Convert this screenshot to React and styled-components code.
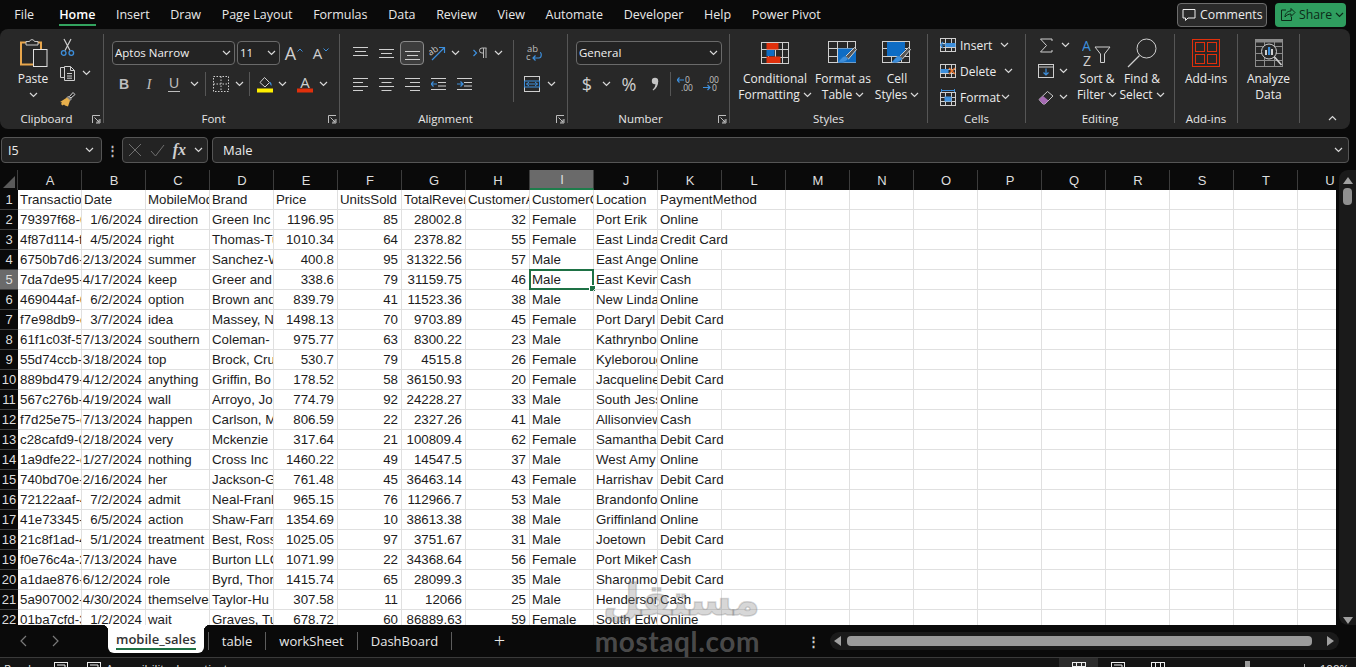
import React from 'react';
import styled, { createGlobalStyle } from 'styled-components';

const GlobalStyle = createGlobalStyle`
  html, body { margin: 0; padding: 0; background: #0a0a0a; }
  * { box-sizing: border-box; }
`;

const UI_FONT = `"Open Sans", "Noto Sans", sans-serif`;
const CELL_FONT = `"Liberation Sans", Arial, sans-serif`;
const LINE = '#cfcfcf';
const BLUE = '#3d8fdc';
const RED = '#e0300c';

const COLS = 'ABCDEFGHIJKLMNOPQRSTU'.split('');
const HEAD = ['TransactionID', 'Date', 'MobileModel', 'Brand', 'Price', 'UnitsSold', 'TotalRevenue', 'CustomerAge', 'CustomerGender', 'Location', 'PaymentMethod'];
const DATA = [
  ['79397f68-6e', '1/6/2024', 'direction', 'Green Inc', '1196.95', '85', '28002.8', '32', 'Female', 'Port Erik', 'Online'],
  ['4f87d114-fa', '4/5/2024', 'right', 'Thomas-Tu', '1010.34', '64', '2378.82', '55', 'Female', 'East Linda', 'Credit Card'],
  ['6750b7d6-a', '2/13/2024', 'summer', 'Sanchez-Wu', '400.8', '95', '31322.56', '57', 'Male', 'East Angel', 'Online'],
  ['7da7de95-1', '4/17/2024', 'keep', 'Greer and', '338.6', '79', '31159.75', '46', 'Male', 'East Kevin', 'Cash'],
  ['469044af-0', '6/2/2024', 'option', 'Brown and', '839.79', '41', '11523.36', '38', 'Male', 'New Linda', 'Online'],
  ['f7e98db9-c', '3/7/2024', 'idea', 'Massey, N', '1498.13', '70', '9703.89', '45', 'Female', 'Port Daryl', 'Debit Card'],
  ['61f1c03f-5a', '7/13/2024', 'southern', 'Coleman-', '975.77', '63', '8300.22', '23', 'Male', 'Kathrynbor', 'Online'],
  ['55d74ccb-4', '3/18/2024', 'top', 'Brock, Cruz', '530.7', '79', '4515.8', '26', 'Female', 'Kyleborough', 'Online'],
  ['889bd479-b', '4/12/2024', 'anything', 'Griffin, Bo', '178.52', '58', '36150.93', '20', 'Female', 'Jacqueline', 'Debit Card'],
  ['567c276b-7', '4/19/2024', 'wall', 'Arroyo, Jo', '774.79', '92', '24228.27', '33', 'Male', 'South Jess', 'Online'],
  ['f7d25e75-c', '7/13/2024', 'happen', 'Carlson, M', '806.59', '22', '2327.26', '41', 'Male', 'Allisonview', 'Cash'],
  ['c28cafd9-0', '2/18/2024', 'very', 'Mckenzie', '317.64', '21', '100809.4', '62', 'Female', 'Samantha', 'Debit Card'],
  ['1a9dfe22-c', '1/27/2024', 'nothing', 'Cross Inc', '1460.22', '49', '14547.5', '37', 'Male', 'West Amy', 'Online'],
  ['740bd70e-d', '2/16/2024', 'her', 'Jackson-G', '761.48', '45', '36463.14', '43', 'Female', 'Harrishav', 'Debit Card'],
  ['72122aaf-4', '7/2/2024', 'admit', 'Neal-Frank', '965.15', '76', '112966.7', '53', 'Male', 'Brandonfo', 'Online'],
  ['41e73345-a', '6/5/2024', 'action', 'Shaw-Farr', '1354.69', '10', '38613.38', '38', 'Male', 'Griffinland', 'Online'],
  ['21c8f1ad-4', '5/1/2024', 'treatment', 'Best, Ross', '1025.05', '97', '3751.67', '31', 'Male', 'Joetown', 'Debit Card'],
  ['f0e76c4a-2', '7/13/2024', 'have', 'Burton LLC', '1071.99', '22', '34368.64', '56', 'Female', 'Port Mikeh', 'Cash'],
  ['a1dae876-e', '6/12/2024', 'role', 'Byrd, Thor', '1415.74', '65', '28099.3', '35', 'Male', 'Sharonmo', 'Debit Card'],
  ['5a907002-1', '4/30/2024', 'themselves', 'Taylor-Hu', '307.58', '11', '12066', '25', 'Male', 'Henderson', 'Cash'],
  ['01ba7cfd-3', '1/2/2024', 'wait', 'Graves, Tu', '678.72', '60', '86889.63', '59', 'Female', 'South Edw', 'Online'],
];
const NUMERIC = [1, 4, 5, 6, 7];

/* ---------- little drawings ---------- */
const Chevron = ({ up, color = '#d8d8d8' }) => (
  <svg width="9" height="6" viewBox="0 0 9 6" fill="none">
    <path d={up ? 'M1 5l3.5-3.5L8 5' : 'M1 1l3.5 3.5L8 1'} stroke={color} strokeWidth="1.2" />
  </svg>
);

const Caret = ({ up }) => (
  <svg width="6" height="4" viewBox="0 0 6 4" fill="none">
    <path d={up ? 'M.5 3.5L3 1l2.5 2.500' : 'M.5 .5L3 3l2.500-2.500'} stroke={BLUE} />
  </svg>
);

const Launcher = () => (
  <svg width="10" height="10" viewBox="0 0 10 10" fill="none" stroke="#bdbdbd">
    <path d="M1.5 9V1.5H9M9 5v4H5M3.5 3.5L8 8M8 5.5V8H5.5" />
  </svg>
);

const IconPaste = () => (
  <svg width="29" height="31" viewBox="0 0 29 31" fill="none">
    <path d="M7 5.5H2V27.5H14M18 5.5h4V12" stroke="#e8a64c" strokeWidth="2" />
    <path d="M7 8V4.500h3.500a2.600 2.600 0 0 1 5 0H19V8z" stroke="#c8c8c8" fill="#282828" />
    <rect x="14.500" y="12.500" width="13.500" height="17" stroke="#e0e0e0" fill="#282828" />
  </svg>
);
const IconCut = () => (
  <svg width="15" height="19" viewBox="0 0 15 19" fill="none">
    <path d="M4 1l6 11.500M11 1L5 12.500" stroke={LINE} strokeWidth="1.200" />
    <circle cx="3.700" cy="15" r="2.300" stroke={BLUE} strokeWidth="1.300" />
    <circle cx="11.300" cy="15" r="2.300" stroke={BLUE} strokeWidth="1.300" />
  </svg>
);
const IconCopy = () => (
  <svg width="17" height="17" viewBox="0 0 17 17" fill="none" stroke={LINE}>
    <path d="M5.500 2.500h-4v10h4" />
    <path d="M5.500 1.500h6l4 4v10h-10zM11.500 1.500v4h4M8 8.500h5M8 11h5M8 13.200h5" />
  </svg>
);
const IconBrush = () => (
  <svg width="17" height="17" viewBox="0 0 17 17" fill="none">
    <path d="M10.500 5.500l3.500-4 2 2-4 3.500z" stroke={LINE} />
    <path d="M9.500 5l3 3-1.500 1.500L8 6.500z" fill="#777" stroke={LINE} strokeWidth=".6" />
    <path d="M8 6.500l3 3-2 6-3-1-1-1-1.500 1L2 13l1-1.500-2-.5z" fill="#e8b04c" />
  </svg>
);
const IconBorders = () => (
  <svg width="16" height="16" viewBox="0 0 16 16" fill="none" stroke={LINE} strokeDasharray="1.500 1.500">
    <rect x=".5" y=".5" width="15" height="15" />
    <path d="M8 .5v15M.5 8h15" />
  </svg>
);
const IconFill = () => (
  <svg width="16" height="18" viewBox="0 0 16 18" fill="none">
    <path d="M3 7.500L7.500 2.500l5 5-4.500 4.500z" stroke={LINE} />
    <path d="M13 7.500c1 1.500 1.500 2.400 1 3" stroke={BLUE} strokeWidth="1.400" />
    <rect y="13.500" width="16" height="4" fill="#ffef00" />
  </svg>
);
const IconColorA = () => (
  <svg width="16" height="18" viewBox="0 0 16 18">
    <text x="8" y="12.500" fontFamily={UI_FONT} fontSize="15" textAnchor="middle" fill={LINE}>A</text>
    <rect y="13.500" width="16" height="4" fill="#e0300c" />
  </svg>
);
const AlignLines = ({ widths, y = 0, anchor = 'left' }) => (
  <svg width="15" height="18" viewBox="0 0 15 18" stroke={LINE} fill="none">
    {widths.map((w, i) => {
      const x = anchor === 'left' ? 0 : anchor === 'right' ? 15 - w : (15 - w) / 2;
      return <path key={i} d={`M${x} ${y + 3.5 + i * 4}h${w}`} />;
    })}
  </svg>
);
const IconOrient = () => (
  <svg width="17" height="16" viewBox="0 0 17 16" fill="none">
    <text x="0" y="9" fontSize="9" fontFamily={UI_FONT} fill={LINE} transform="rotate(-35 4 8)">ab</text>
    <path d="M3 15L15 3M10 2.500h5.500V8" stroke={BLUE} strokeWidth="1.200" />
  </svg>
);
const IconRtl = () => (
  <svg width="15" height="12" viewBox="0 0 15 12" fill="none">
    <path d="M.500 3l3 3-3 3" stroke={BLUE} strokeWidth="1.200" />
    <path d="M13 1v10M10.500 1v10M13.500 1H9a2.500 2.500 0 0 0 0 5h1.500" stroke="#b8b8b8" />
  </svg>
);
const IconIndent = ({ inward }) => (
  <svg width="15" height="14" viewBox="0 0 15 14" fill="none">
    <path d="M0 1.500h15M7 5.500h8M7 9h8M0 12.500h15" stroke={LINE} />
    <path d={inward ? 'M0 7h6M3.500 4.500L6 7l-2.500 2.500' : 'M6 7H0M2.500 4.500L0 7l2.500 2.500'} stroke={BLUE} strokeWidth="1.200" />
  </svg>
);
const IconWrap = () => (
  <svg width="16" height="18" viewBox="0 0 16 18" fill="none">
    <text x="1" y="8" fontSize="9.500" fontFamily={UI_FONT} fill="#bdbdbd">ab</text>
    <text x="0" y="16" fontSize="9.500" fontFamily={UI_FONT} fill="#bdbdbd">c</text>
    <path d="M14 8.500c1.800 0 1.800 5.500-1 5.500H7M9.500 11.500L7 14l2.500 2.500" stroke={BLUE} strokeWidth="1.200" />
  </svg>
);
const IconMerge = () => (
  <svg width="16" height="16" viewBox="0 0 16 16" fill="none">
    <rect x=".500" y=".500" width="15" height="15" stroke={LINE} />
    <rect x=".500" y="5" width="15" height="6" stroke={BLUE} />
    <path d="M2.500 8h11M5 6l-2.500 2L5 10M11 6l2.500 2L11 10" stroke={BLUE} />
  </svg>
);
const IconComma = () => (
  <svg width="8" height="14" viewBox="0 0 8 14">
    <circle cx="4" cy="4" r="3.200" fill="#c4c4c4" />
    <path d="M7.200 4c0 4-1.500 7.500-5 9.500l-.6-.8C3.500 11 4.500 9 4.500 6.500z" fill="#c4c4c4" />
  </svg>
);
const IconDecimal = ({ more }) => (
  <svg width="17" height="16" viewBox="0 0 17 16" fill="none">
    <text x={more ? 4 : 8} y="7" fontSize="8.500" fontFamily={UI_FONT} fill="#c4c4c4">{more ? '.00' : '0'}</text>
    <text x={more ? 9 : 4} y="15" fontSize="8.500" fontFamily={UI_FONT} fill="#c4c4c4">{more ? '0' : '.00'}</text>
    <path
      d={more ? 'M0 11.500h7M4.500 9L7 11.500 4.500 14' : 'M7 4H0M2.500 1.500L0 4l2.500 2.500'}
      stroke={BLUE}
      strokeWidth="1.200"
    />
  </svg>
);
const GridLines = ({ w, h, cols, rows, color = LINE }) => (
  <g stroke={color} fill="none">
    <rect x=".500" y=".500" width={w - 1} height={h - 1} />
    {Array.from({ length: cols - 1 }, (_, i) => (
      <path key={`c${i}`} d={`M${Math.round(((i + 1) * w) / cols) + 0.5} 0v${h}`} />
    ))}
    {Array.from({ length: rows - 1 }, (_, i) => (
      <path key={`r${i}`} d={`M0 ${Math.round(((i + 1) * h) / rows) + 0.5}h${w}`} />
    ))}
  </g>
);
const MiniBrush = () => (
  <g>
    <path d="M26.500 6.500l2 2-8 9.500-3-2.500z" fill="#555" stroke="#cfcfcf" />
    <path d="M17 15c-3 .5-4 3-7 6 4 1 8 0 10-3z" fill={BLUE} stroke="#1c6cb8" strokeWidth=".6" />
  </g>
);
const IconConditional = () => (
  <svg width="28" height="22" viewBox="0 0 28 22">
    <GridLines w={28} h={22} cols={4} rows={3} />
    <rect x="5.500" y="1" width="12" height="6.500" fill={RED} />
    <rect x="5.500" y="8" width="8" height="6" fill="#0e6cc4" />
    <rect x="5.500" y="14.500" width="14" height="6.500" fill={RED} />
  </svg>
);
const IconTable = () => (
  <svg width="31" height="24" viewBox="0 0 31 24">
    <GridLines w={28} h={22} cols={3} rows={3} />
    <rect x="10" y="7.500" width="18" height="14" fill="#0e6cc4" />
    <MiniBrush />
  </svg>
);
const IconCellStyles = () => (
  <svg width="31" height="24" viewBox="0 0 31 24">
    <GridLines w={28} h={22} cols={3} rows={3} />
    <rect x="5" y="1" width="18" height="14" fill="#0e6cc4" />
    <MiniBrush />
  </svg>
);
const IconInsert = () => (
  <svg width="16" height="14" viewBox="0 0 16 14" fill="none">
    <GridLines w={16} h={14} cols={3} rows={3} />
    <rect x="5.500" y="5" width="10" height="4" fill={BLUE} />
    <path d="M7 7H.500M3 4L.500 7 3 10" stroke={BLUE} strokeWidth="1.200" />
  </svg>
);
const IconDelete = () => (
  <svg width="16" height="14" viewBox="0 0 16 14" fill="none">
    <GridLines w={16} h={14} cols={3} rows={3} />
    <rect x=".500" y="5" width="8" height="4" fill={BLUE} />
    <path d="M9 4l6 6M15 4l-6 6" stroke="#e8742c" strokeWidth="1.300" />
  </svg>
);
const IconFormat = () => (
  <svg width="16" height="17" viewBox="0 0 16 17" fill="none">
    <path d="M1.500 0v3M14.500 0v3M1.500 1.500h13" stroke={BLUE} />
    <g transform="translate(0 3)"><GridLines w={16} h={14} cols={3} rows={3} /></g>
    <rect x="4.500" y="7.500" width="7" height="5" fill={BLUE} />
  </svg>
);
const IconSum = () => (
  <svg width="15" height="15" viewBox="0 0 15 15">
    <path d="M13 3V1H1.500L7.500 7.500 1.500 14H13v-2" fill="none" stroke={LINE} />
  </svg>
);
const IconFillDown = () => (
  <svg width="16" height="14" viewBox="0 0 16 14" fill="none">
    <rect x=".500" y=".500" width="15" height="13" stroke={LINE} />
    <path d="M.500 3h15" stroke={LINE} />
    <path d="M8 4.500V11M5.500 8.500L8 11l2.500-2.500" stroke={BLUE} strokeWidth="1.200" />
  </svg>
);
const IconEraser = () => (
  <svg width="16" height="15" viewBox="0 0 16 15" fill="none">
    <path d="M1 9.500L9.500 1.500 15 6l-8 8H5z" stroke="#c8c8c8" />
    <path d="M1 9.500L5 6l5.500 4.500L7 14H5z" fill="#a66bb4" />
  </svg>
);
const IconSort = () => (
  <svg width="30" height="30" viewBox="0 0 30 30" fill="none">
    <text x="0" y="13" fontSize="14" fontFamily={UI_FONT} fill={BLUE}>A</text>
    <text x="1" y="28" fontSize="14" fontFamily={UI_FONT} fill={LINE}>Z</text>
    <path d="M13 9h15l-5.500 7v8.500h-4V16z" stroke={LINE} />
  </svg>
);
const IconSearch = () => (
  <svg width="30" height="30" viewBox="0 0 30 30" fill="none" stroke={LINE}>
    <circle cx="19.500" cy="10.500" r="9.500" />
    <path d="M12.500 17.500L1 29" strokeWidth="1.300" />
  </svg>
);
const IconAddIns = () => (
  <svg width="28" height="28" viewBox="0 0 28 28" fill="none" stroke={RED}>
    <rect x=".500" y=".500" width="27" height="27" />
    <rect x="3.500" y="3.500" width="9" height="9" />
    <rect x="15.500" y="3.500" width="9" height="9" />
    <rect x="3.500" y="15.500" width="9" height="9" />
    <rect x="15.500" y="15.500" width="9" height="9" />
  </svg>
);
const IconAnalyze = () => (
  <svg width="28" height="28" viewBox="0 0 28 28" fill="none">
    <GridLines w={28} h={28} cols={3} rows={4} color="#8c8c8c" />
    <rect x="0" y="0" width="28" height="3.500" fill="#8c8c8c" />
    <circle cx="14" cy="12.500" r="7.500" stroke={LINE} fill="#282828" />
    <path d="M19.500 18l7 8" stroke={LINE} strokeWidth="1.600" />
    <rect x="10" y="11" width="2" height="5" fill={LINE} />
    <rect x="13" y="8" width="2.200" height="8" fill={BLUE} />
    <rect x="16" y="10" width="2" height="6" fill={LINE} />
  </svg>
);
const IconComment = () => (
  <svg width="14" height="14" viewBox="0 0 14 14" fill="none" stroke="#eee">
    <path d="M1 1.500h12v8.500H6L3.500 12.500V10H1z" />
  </svg>
);
const IconShare = () => (
  <svg width="16" height="15" viewBox="0 0 16 15" fill="none" stroke="#0c2a18">
    <path d="M6 3H1.500v10.500h10V10" />
    <path d="M5 10c0-3.500 2.500-6 6-6V1.500l4 4-4 4V7C8.500 7 6.500 8 5 10z" />
  </svg>
);
const IconX = () => (
  <svg width="14" height="14" viewBox="0 0 14 14" stroke="#6f6f6f" fill="none">
    <path d="M1 1l12 12M13 1L1 13" />
  </svg>
);
const IconCheck = () => (
  <svg width="15" height="13" viewBox="0 0 15 13" stroke="#6f6f6f" fill="none">
    <path d="M1 7l4.500 5L14 1" />
  </svg>
);
const Pager = ({ next }) => (
  <svg width="8" height="12" viewBox="0 0 8 12" fill="none" stroke="#7a7a7a" strokeWidth="1.200">
    <path d={next ? 'M1 1l5 5-5 5' : 'M7 1L2 6l5 5'} />
  </svg>
);
const Triangle = ({ dir, color = '#a0a0a0' }) => {
  const upright = dir === 'up' || dir === 'down';
  const d = {
    up: 'M0 8L5 1l5 7z',
    down: 'M0 1l5 7 5-7z',
    left: 'M8 0L1 5l7 5z',
    right: 'M1 0l7 5-7 5z',
  }[dir];
  return (
    <svg width={upright ? 10 : 8} height={upright ? 8 : 10} viewBox={upright ? '0 0 10 8' : '0 0 8 10'}>
      <path d={d} fill={color} />
    </svg>
  );
};
const ViewIcon = ({ kind }) => (
  <svg width="14" height="14" viewBox="0 0 14 14" fill="none" stroke="#eee">
    <rect x=".500" y=".500" width="13" height="13" />
    {kind === 'grid' && <path d="M0 4.500h14M4.500 0v14M9.500 0v14" />}
    {kind === 'page' && <path d="M3 3h8v11" />}
    {kind === 'break' && <path d="M4.500 0v14M9.500 0v14" />}
  </svg>
);

/* ---------- page ---------- */
const Page = styled.div`
  position: relative;
  display: flex;
  flex-direction: column;
  width: 1356px;
  height: 667px;
  overflow: hidden;
  background: #0a0a0a;
  font-family: ${UI_FONT};
  font-size: 12px;
  color: #ececec;
`;

const MenuBar = styled.div`
  display: flex;
  align-items: center;
  height: 29px;
  padding-left: 4px;
  flex-shrink: 0;
`;

const MenuTab = styled.div`
  position: relative;
  padding: 0 10.3px;
  line-height: 28px;
  font-size: 12.5px;
  font-weight: ${(p) => (p.$active ? 600 : 400)};
  color: ${(p) => (p.$active ? '#fff' : '#e8e8e8')};
  margin-right: ${(p) => (p.$first ? '4.5px' : 0)};

  &::after {
    content: ${(p) => (p.$active ? "''" : 'none')};
    position: absolute;
    left: 10px;
    right: 10px;
    bottom: 3px;
    height: 2px;
    background: #33a35f;
  }
`;

const MenuActions = styled.div`
  display: flex;
  gap: 8px;
  margin-left: auto;
  padding-right: 10px;
`;

const CommentsButton = styled.div`
  display: flex;
  align-items: center;
  gap: 4px;
  width: 90px;
  height: 24px;
  padding-left: 4px;
  background: #2a2a2a;
  border: 1px solid #6d6d6d;
  border-radius: 4px;
  font-size: 12.3px;
`;

const ShareButton = styled.div`
  display: flex;
  align-items: center;
  gap: 3px;
  width: 71px;
  height: 24px;
  padding-left: 5px;
  background: #2f9e5f;
  border-radius: 4px;
  font-size: 12.3px;
  color: #0c2a18;
`;

const Ribbon = styled.div`
  position: relative;
  display: flex;
  width: 1350px;
  height: 100px;
  padding: 5px 0 6px;
  flex-shrink: 0;
  background: #282828;
  border-radius: 8px;
`;

const Group = styled.div`
  position: relative;
  display: flex;
  flex-direction: column;
  width: ${(p) => p.$w}px;
  flex-shrink: 0;
  border-right: 1px solid #565656;
`;

const GroupBody = styled.div`
  display: flex;
  flex: 1;
  min-height: 0;
  padding-left: ${(p) => p.$pad || 0}px;
`;

const GroupLabel = styled.div`
  height: 14px;
  margin-bottom: -3px;
  padding-right: ${(p) => p.$pr || 0}px;
  line-height: 14px;
  text-align: center;
  font-size: 11.5px;
  color: #e6e6e6;
`;

const LauncherSlot = styled.span`
  position: absolute;
  right: 2px;
  bottom: -1px;
  display: flex;
`;

const BigButton = styled.div`
  display: flex;
  flex-direction: column;
  align-items: center;
  width: ${(p) => p.$w}px;
  margin-left: ${(p) => p.$ml || 0}px;
  flex-shrink: 0;
  line-height: 16px;
  font-size: 12px;
  white-space: nowrap;
`;

const BigIcon = styled.div`
  display: flex;
  align-items: center;
  justify-content: center;
  height: 37px;
`;

const CaretLine = styled.div`
  display: flex;
  align-items: center;
  justify-content: center;
  gap: 3px;
  height: 16px;
`;

const ToolStack = styled.div`
  display: flex;
  flex-direction: column;
  width: ${(p) => (p.$w ? `${p.$w}px` : 'auto')};
  margin-left: ${(p) => p.$ml || 0}px;
  padding-top: ${(p) => p.$top ?? 0}px;
  gap: ${(p) => p.$gap ?? 0}px;
`;

const ToolRow = styled.div`
  display: flex;
  align-items: center;
  height: 24px;
`;

const Tool = styled.div`
  display: flex;
  align-items: center;
  justify-content: center;
  flex-shrink: 0;
  width: ${(p) => p.$w}px;
  height: 24px;
  margin-left: ${(p) => p.$ml || 0}px;
  border-radius: 4px;
  border: ${(p) => (p.$active ? '1px solid #8a8a8a' : 'none')};
  background: ${(p) => (p.$active ? '#3d3d3d' : 'transparent')};
  font-size: ${(p) => p.$size || 13}px;
  color: #cfcfcf;
`;

const Bold = styled.span`
  font-family: ${CELL_FONT};
  font-weight: 700;
  font-size: 14px;
  color: #bdbdbd;
`;
const Italic = styled.span`
  font-family: "Liberation Serif", serif;
  font-style: italic;
  font-size: 15px;
  color: #bdbdbd;
`;
const Under = styled.span`
  font-family: ${CELL_FONT};
  font-size: 14px;
  color: #bdbdbd;
  border-bottom: 1px solid #bdbdbd;
  line-height: 15px;
  padding: 0 1px;
`;
const GrowA = styled.span`
  display: flex;
  align-items: flex-start;
  gap: 1px;
  font-size: ${(p) => p.$size}px;
  line-height: 20px;
  color: #cfcfcf;

  svg { margin-top: 5px; }
`;

const VRule = styled.div`
  width: 1px;
  height: ${(p) => p.$h || 24}px;
  margin: 0 ${(p) => p.$m ?? 3}px;
  background: #565656;
  flex-shrink: 0;
`;

const Select = styled.div`
  display: flex;
  align-items: center;
  justify-content: space-between;
  width: ${(p) => p.$w}px;
  height: 24px;
  margin-left: ${(p) => p.$ml || 0}px;
  padding: 0 3px 1px 2px;
  flex-shrink: 0;
  background: #232323;
  border: 1px solid #6a6a6a;
  border-radius: 4px;
  font-size: 11.5px;
  color: #f0f0f0;
`;

const CellAction = styled.div`
  display: flex;
  align-items: center;
  height: 22px;
  font-size: 12px;
`;

const ActionIcon = styled.span`
  display: flex;
  justify-content: center;
  width: 20px;
  margin-right: 2px;
`;

const ActionChevron = styled.span`
  display: flex;
  margin-left: ${(p) => p.$ml || 0}px;
`;

const CollapseSlot = styled.div`
  position: absolute;
  right: 13px;
  bottom: 8px;
  display: flex;
`;

const FormulaBar = styled.div`
  display: flex;
  align-items: center;
  height: 26px;
  margin-top: 8px;
  padding: 0 7px 0 1px;
  flex-shrink: 0;
`;

const FieldBox = styled.div`
  display: flex;
  align-items: center;
  height: 26px;
  background: #232323;
  border: 1px solid #555;
  border-radius: 4px;
  font-size: 13px;
`;

const NameBox = styled(FieldBox)`
  justify-content: space-between;
  width: 101px;
  padding: 0 7px 0 6px;
  font-size: 12.5px;
`;

const BarDots = styled.span`
  width: 20px;
  text-align: center;
  font-weight: 700;
  color: #bbb;
  font-size: 13px;
`;

const FuncBox = styled(FieldBox)`
  justify-content: space-between;
  width: 86px;
  padding: 0 4px 0 5px;
`;

const FxLabel = styled.span`
  font-family: "Liberation Serif", serif;
  font-style: italic;
  font-weight: 700;
  font-size: 16px;
  color: #cfcfcf;
`;

const ValueBox = styled(FieldBox)`
  flex: 1;
  justify-content: space-between;
  margin-left: 4px;
  padding: 0 5px 0 10px;
`;

const SheetArea = styled.div`
  display: flex;
  height: 455px;
  flex-shrink: 0;
  margin-top: 7px;
`;

const SheetClip = styled.div`
  flex: 1;
  min-width: 0;
  overflow: hidden;
`;

const Sheet = styled.div`
  display: grid;
  grid-template-columns: 18px repeat(21, 64px);
  grid-auto-rows: 20px;
  width: max-content;
  background: #fff;
  font-family: ${CELL_FONT};
  font-size: 13.3px;
  color: #1c1c1c;
`;

const Corner = styled.div`
  position: relative;
  background: #0a0a0a;
  border-right: 1px solid #3c3c3c;

  &::after {
    content: '';
    position: absolute;
    right: 2px;
    bottom: 2px;
    border-style: solid;
    border-width: 0 0 12px 12px;
    border-color: transparent transparent #5a5a5a transparent;
  }
`;

const ColHead = styled.div`
  display: flex;
  align-items: center;
  justify-content: center;
  padding-left: 1px;
  background: ${(p) => (p.$selected ? '#6a6a6a' : '#0a0a0a')};
  border-right: 1px solid #3c3c3c;
  border-bottom: ${(p) => (p.$selected ? '2px solid #1e7d4b' : 'none')};
  font-size: 13px;
  color: #dedede;
`;

const RowHead = styled.div`
  display: flex;
  align-items: center;
  justify-content: center;
  background: ${(p) => (p.$selected ? '#6a6a6a' : '#0a0a0a')};
  border-bottom: 1px solid #3c3c3c;
  font-size: 13px;
  color: #dedede;
`;

const Cell = styled.div`
  position: relative;
  padding: 0 ${(p) => (p.$num ? '3px' : '0')} 0 ${(p) => (p.$num ? '0' : '2px')};
  line-height: 20px;
  text-align: ${(p) => (p.$num ? 'right' : 'left')};
  white-space: nowrap;
  overflow: ${(p) => (p.$spill ? 'visible' : 'hidden')};
  border-right: 1px solid ${(p) => (p.$spill ? 'transparent' : '#e0e0e0')};
  border-bottom: 1px solid #e0e0e0;

  ${(p) =>
    p.$active &&
    `
    overflow: visible;
    &::before {
      content: '';
      position: absolute;
      inset: -1px -1px -1px -1px;
      border: 2px solid #1e7145;
    }
    &::after {
      content: '';
      position: absolute;
      right: -3px;
      bottom: -3px;
      width: 5px;
      height: 5px;
      background: #1e7145;
      border: 1px solid #fff;
    }
  `}
`;

const VScroll = styled.div`
  display: flex;
  flex-direction: column;
  align-items: center;
  width: 17px;
  margin-left: 3px;
  padding: 6px 0 1px;
  flex-shrink: 0;
  background: #1a1a1a;
  border-radius: 9px 0 0 9px;
`;

const VThumb = styled.div`
  width: 9px;
  height: 17px;
  margin-top: 4px;
  background: #909090;
  border-radius: 4px;
`;

const VSpacer = styled.div`
  flex: 1;
`;

const TabBar = styled.div`
  display: flex;
  align-items: center;
  height: 32px;
  flex-shrink: 0;
  font-size: 13px;
  color: #e8e8e8;
`;

const TabNav = styled.div`
  display: flex;
  gap: 25px;
  width: 108px;
  padding-left: 19px;
`;

const ActiveTab = styled.div`
  position: relative;
  align-self: flex-start;
  display: flex;
  flex-direction: column;
  align-items: center;
  width: 96px;
  height: 28px;
  padding-top: 5px;
  background: #fff;
  border-radius: 0 0 6px 6px;
  font-weight: 600;
  color: #333;

  &::before, &::after {
    content: '';
    position: absolute;
    top: 0;
    width: 6px;
    height: 6px;
  }
  &::before {
    left: -6px;
    background: radial-gradient(circle at 0 100%, transparent 6px, #fff 6.5px);
  }
  &::after {
    right: -6px;
    background: radial-gradient(circle at 100% 100%, transparent 6px, #fff 6.5px);
  }
`;

const TabUnderline = styled.div`
  width: 80px;
  height: 2px;
  background: #1e7145;
`;

const TabItem = styled.div`
  width: ${(p) => p.$w}px;
  text-align: center;
`;

const TabSep = styled.div`
  width: 1px;
  height: 18px;
  margin-left: ${(p) => p.$ml || 0}px;
  background: #5c5c5c;
`;

const PlusBtn = styled.div`
  width: 95px;
  text-align: center;
  font-size: 20px;
  font-weight: 300;
  line-height: 20px;
`;

const HScrollWrap = styled.div`
  display: flex;
  align-items: center;
  margin-left: auto;
  padding-right: 17px;
`;

const HDots = styled.span`
  width: 16px;
  margin-right: 9px;
  text-align: center;
  font-weight: 700;
  color: #ccc;
`;

const HTrack = styled.div`
  display: flex;
  align-items: center;
  justify-content: space-between;
  width: 509px;
  height: 18px;
  padding: 0 5px 0 3px;
  background: #1a1a1a;
  border-radius: 9px;
`;

const HThumb = styled.div`
  width: 465px;
  height: 10px;
  margin-right: 8px;
  background: #9b9b9b;
  border-radius: 4px;
`;

const StatusBar = styled.div`
  display: flex;
  align-items: center;
  height: 22px;
  margin-bottom: -12px;
  padding-left: 4px;
  flex-shrink: 0;
  background: #141414;
  border-top: 1px solid #3a3a3a;
  font-size: 11.5px;
  color: #e4e4e4;
`;

const ReadyText = styled.span`
  width: 50px;
`;

const StatusIcon = styled.span`
  display: flex;
  width: ${(p) => p.$w}px;
  margin-left: ${(p) => p.$ml || 0}px;
`;

const StatusText = styled.span`
  margin-left: 3px;
`;

const ViewGroup = styled.div`
  display: flex;
  align-items: center;
  margin-left: auto;
`;

const ViewButton = styled.div`
  display: flex;
  align-items: center;
  justify-content: center;
  width: ${(p) => (p.$active ? 39 : 40)}px;
  height: 21px;
  background: ${(p) => (p.$active ? '#2c2c2c' : 'transparent')};
`;

const ZoomSlider = styled.div`
  position: relative;
  width: 123px;
  margin: 0 4px;
  height: 21px;

  &::before {
    content: '';
    position: absolute;
    left: 63px;
    top: 3px;
    width: 5px;
    height: 12px;
    background: #9a9a9a;
  }
  &::after {
    content: '';
    position: absolute;
    right: 0;
    top: 6px;
    width: 1px;
    height: 9px;
    background: #b0b0b0;
  }
`;

const ZoomText = styled.span`
  width: 47px;
  padding-right: 7px;
  text-align: right;
`;

const Watermark = styled.div`
  position: absolute;
  left: 595px;
  top: 574px;
  display: flex;
  flex-direction: column;
  align-items: flex-end;
  width: 165px;
  pointer-events: none;
`;

const WatermarkArabic = styled.div`
  font-family: "DejaVu Sans", sans-serif;
  font-weight: 700;
  font-size: 43px;
  line-height: 52px;
  -webkit-text-stroke: 1.5px rgba(130, 130, 130, 0.32);
  color: rgba(130, 130, 130, 0.32);
`;

const WatermarkLatin = styled.div`
  font-family: "Lato", "Open Sans", sans-serif;
  font-weight: 700;
  font-size: 28px;
  line-height: 30px;
  letter-spacing: 0.6px;
  color: rgba(130, 130, 130, 0.55);
`;

const MENU = ['File', 'Home', 'Insert', 'Draw', 'Page Layout', 'Formulas', 'Data', 'Review', 'View', 'Automate', 'Developer', 'Help', 'Power Pivot'];
const ALIGN_V = [15, 11, 15];
const ALIGN_H = [15, 10, 15, 10];

const App = () => (
  <Page>
    <GlobalStyle />
    <MenuBar>
      {MENU.map((m) => (
        <MenuTab key={m} $active={m === 'Home'} $first={m === 'File'}>{m}</MenuTab>
      ))}
      <MenuActions>
        <CommentsButton><IconComment />Comments</CommentsButton>
        <ShareButton><IconShare />Share<Chevron color="#0c2a18" /></ShareButton>
      </MenuActions>
    </MenuBar>

    <Ribbon>
      <Group $w={104}>
        <GroupBody $pad={15}>
          <BigButton $w={36}>
            <BigIcon><IconPaste /></BigIcon>
            <CaretLine>Paste</CaretLine>
            <CaretLine><Chevron /></CaretLine>
          </BigButton>
          <ToolStack $top={1} $gap={2} $ml={5}>
            <ToolRow><Tool $w={22}><IconCut /></Tool></ToolRow>
            <ToolRow><Tool $w={22}><IconCopy /></Tool><Tool $w={16}><Chevron /></Tool></ToolRow>
            <ToolRow><Tool $w={22}><IconBrush /></Tool></ToolRow>
          </ToolStack>
        </GroupBody>
        <GroupLabel $pr={10}>Clipboard</GroupLabel>
        <LauncherSlot><Launcher /></LauncherSlot>
      </Group>

      <Group $w={236}>
        <GroupBody $pad={8}>
          <ToolStack $top={7} $gap={7}>
            <ToolRow>
              <Select $w={123}>Aptos Narrow<Chevron /></Select>
              <Select $w={43} $ml={2}>11<Chevron /></Select>
              <Tool $w={28}><GrowA $size={18}>A<Caret up /></GrowA></Tool>
              <Tool $w={26}><GrowA $size={15}>A<Caret /></GrowA></Tool>
            </ToolRow>
            <ToolRow>
              <Tool $w={24}><Bold>B</Bold></Tool>
              <Tool $w={26}><Italic>I</Italic></Tool>
              <Tool $w={24}><Under>U</Under></Tool>
              <Tool $w={16}><Chevron /></Tool>
              <VRule />
              <Tool $w={24}><IconBorders /></Tool>
              <Tool $w={13}><Chevron /></Tool>
              <VRule />
              <Tool $w={23}><IconFill /></Tool>
              <Tool $w={13}><Chevron /></Tool>
              <Tool $w={24} $ml={4}><IconColorA /></Tool>
              <Tool $w={12}><Chevron /></Tool>
            </ToolRow>
          </ToolStack>
        </GroupBody>
        <GroupLabel $pr={16}>Font</GroupLabel>
        <LauncherSlot><Launcher /></LauncherSlot>
      </Group>

      <Group $w={228}>
        <GroupBody $pad={8}>
          <ToolStack $top={7} $gap={7}>
            <ToolRow>
              <Tool $w={25}><AlignLines widths={ALIGN_V} anchor="center" /></Tool>
              <Tool $w={26}><AlignLines widths={ALIGN_V} y={2} anchor="center" /></Tool>
              <Tool $w={24} $ml={1} $active><AlignLines widths={ALIGN_V} y={4} anchor="center" /></Tool>
              <Tool $w={24} $ml={1}><IconOrient /></Tool>
              <Tool $w={12}><Chevron /></Tool>
              <Tool $w={24} $ml={7}><IconRtl /></Tool>
              <Tool $w={12}><Chevron /></Tool>
            </ToolRow>
            <ToolRow>
              <Tool $w={25}><AlignLines widths={ALIGN_H} /></Tool>
              <Tool $w={26}><AlignLines widths={ALIGN_H} anchor="center" /></Tool>
              <Tool $w={26}><AlignLines widths={ALIGN_H} anchor="right" /></Tool>
              <Tool $w={26}><IconIndent /></Tool>
              <Tool $w={26}><IconIndent inward /></Tool>
            </ToolRow>
          </ToolStack>
          <ToolStack $top={6} $ml={9}>
            <VRule $h={62} $m={0} />
          </ToolStack>
          <ToolStack $top={7} $gap={7} $ml={8}>
            <ToolRow><Tool $w={24}><IconWrap /></Tool></ToolRow>
            <ToolRow><Tool $w={20}><IconMerge /></Tool><Tool $w={18}><Chevron /></Tool></ToolRow>
          </ToolStack>
        </GroupBody>
        <GroupLabel $pr={16}>Alignment</GroupLabel>
        <LauncherSlot><Launcher /></LauncherSlot>
      </Group>

      <Group $w={162}>
        <GroupBody $pad={8}>
          <ToolStack $top={7} $gap={7}>
            <ToolRow><Select $w={146}>General<Chevron /></Select></ToolRow>
            <ToolRow>
              <Tool $w={22} $size={18}>$</Tool>
              <Tool $w={16}><Chevron /></Tool>
              <Tool $w={26} $ml={2} $size={18}>%</Tool>
              <Tool $w={26}><IconComma /></Tool>
              <VRule $m={2} />
              <Tool $w={24}><IconDecimal /></Tool>
              <Tool $w={24} $ml={2}><IconDecimal more /></Tool>
            </ToolRow>
          </ToolStack>
        </GroupBody>
        <GroupLabel $pr={16}>Number</GroupLabel>
        <LauncherSlot><Launcher /></LauncherSlot>
      </Group>

      <Group $w={198}>
        <GroupBody $pad={12}>
          <BigButton $w={66}>
            <BigIcon><IconConditional /></BigIcon>
            <CaretLine>Conditional</CaretLine>
            <CaretLine>Formatting<Chevron /></CaretLine>
          </BigButton>
          <BigButton $w={66} $ml={2}>
            <BigIcon><IconTable /></BigIcon>
            <CaretLine>Format as</CaretLine>
            <CaretLine>Table<Chevron /></CaretLine>
          </BigButton>
          <BigButton $w={42}>
            <BigIcon><IconCellStyles /></BigIcon>
            <CaretLine>Cell</CaretLine>
            <CaretLine>Styles<Chevron /></CaretLine>
          </BigButton>
        </GroupBody>
        <GroupLabel>Styles</GroupLabel>
      </Group>

      <Group $w={98}>
        <GroupBody $pad={10}>
          <ToolStack $gap={4}>
            <CellAction><ActionIcon><IconInsert /></ActionIcon>Insert<ActionChevron $ml={8}><Chevron /></ActionChevron></CellAction>
            <CellAction><ActionIcon><IconDelete /></ActionIcon>Delete<ActionChevron $ml={8}><Chevron /></ActionChevron></CellAction>
            <CellAction><ActionIcon><IconFormat /></ActionIcon>Format<ActionChevron $ml={1}><Chevron /></ActionChevron></CellAction>
          </ToolStack>
        </GroupBody>
        <GroupLabel>Cells</GroupLabel>
      </Group>

      <Group $w={149}>
        <GroupBody $pad={10}>
          <ToolStack $gap={4} $w={37}>
            <CellAction><ActionIcon><IconSum /></ActionIcon><ActionChevron $ml={3}><Chevron /></ActionChevron></CellAction>
            <CellAction><ActionIcon><IconFillDown /></ActionIcon><ActionChevron $ml={1}><Chevron /></ActionChevron></CellAction>
            <CellAction><ActionIcon><IconEraser /></ActionIcon><ActionChevron $ml={1}><Chevron /></ActionChevron></CellAction>
          </ToolStack>
          <BigButton $w={48}>
            <BigIcon><IconSort /></BigIcon>
            <CaretLine>Sort &amp;</CaretLine>
            <CaretLine>Filter<Chevron /></CaretLine>
          </BigButton>
          <BigButton $w={42}>
            <BigIcon><IconSearch /></BigIcon>
            <CaretLine>Find &amp;</CaretLine>
            <CaretLine>Select<Chevron /></CaretLine>
          </BigButton>
        </GroupBody>
        <GroupLabel>Editing</GroupLabel>
      </Group>

      <Group $w={63}>
        <GroupBody>
          <BigButton $w={62}>
            <BigIcon><IconAddIns /></BigIcon>
            <CaretLine>Add-ins</CaretLine>
          </BigButton>
        </GroupBody>
        <GroupLabel>Add-ins</GroupLabel>
      </Group>

      <Group $w={62}>
        <GroupBody>
          <BigButton $w={61}>
            <BigIcon><IconAnalyze /></BigIcon>
            <CaretLine>Analyze</CaretLine>
            <CaretLine>Data</CaretLine>
          </BigButton>
        </GroupBody>
      </Group>

      <CollapseSlot><Chevron up /></CollapseSlot>
    </Ribbon>

    <FormulaBar>
      <NameBox>I5<Chevron /></NameBox>
      <BarDots>⋮</BarDots>
      <FuncBox>
        <IconX />
        <IconCheck />
        <FxLabel>fx</FxLabel>
        <Chevron />
      </FuncBox>
      <ValueBox>Male<Chevron /></ValueBox>
    </FormulaBar>

    <SheetArea>
      <SheetClip>
        <Sheet>
          <Corner />
          {COLS.map((c) => (
            <ColHead key={c} $selected={c === 'I'}>{c}</ColHead>
          ))}
          {[HEAD, ...DATA].map((row, r) => (
            <React.Fragment key={r}>
              <RowHead $selected={r === 4}>{r + 1}</RowHead>
              {COLS.map((c, i) => (
                <Cell
                  key={c}
                  $num={r > 0 && NUMERIC.includes(i)}
                  $spill={i === 10 && row[i].length > 6}
                  $active={r === 4 && c === 'I'}
                >
                  {row[i]}
                </Cell>
              ))}
            </React.Fragment>
          ))}
        </Sheet>
      </SheetClip>
      <VScroll>
        <Triangle dir="up" />
        <VThumb />
        <VSpacer />
        <Triangle dir="down" />
      </VScroll>
    </SheetArea>

    <TabBar>
      <TabNav><Pager /><Pager next /></TabNav>
      <ActiveTab>mobile_sales<TabUnderline /></ActiveTab>
      <TabSep $ml={4} />
      <TabItem $w={56}>table</TabItem>
      <TabSep />
      <TabItem $w={91}>workSheet</TabItem>
      <TabSep />
      <TabItem $w={93}>DashBoard</TabItem>
      <TabSep />
      <PlusBtn>+</PlusBtn>
      <HScrollWrap>
        <HDots>⋮</HDots>
        <HTrack>
          <Triangle dir="left" />
          <HThumb />
          <Triangle dir="right" />
        </HTrack>
      </HScrollWrap>
    </TabBar>

    <StatusBar>
      <ReadyText>Ready</ReadyText>
      <StatusIcon $w={16}><ViewIcon kind="page" /></StatusIcon>
      <StatusIcon $w={16} $ml={17}><ViewIcon kind="page" /></StatusIcon>
      <StatusText>Accessibility: Investigate</StatusText>
      <ViewGroup>
        <ViewButton $active><ViewIcon kind="grid" /></ViewButton>
        <ViewButton><ViewIcon kind="page" /></ViewButton>
        <ViewButton><ViewIcon kind="break" /></ViewButton>
        <ZoomSlider />
        <ZoomText>100%</ZoomText>
      </ViewGroup>
    </StatusBar>

    <Watermark>
      <WatermarkArabic>مستقل</WatermarkArabic>
      <WatermarkLatin>mostaql.com</WatermarkLatin>
    </Watermark>
  </Page>
);

export default App;
